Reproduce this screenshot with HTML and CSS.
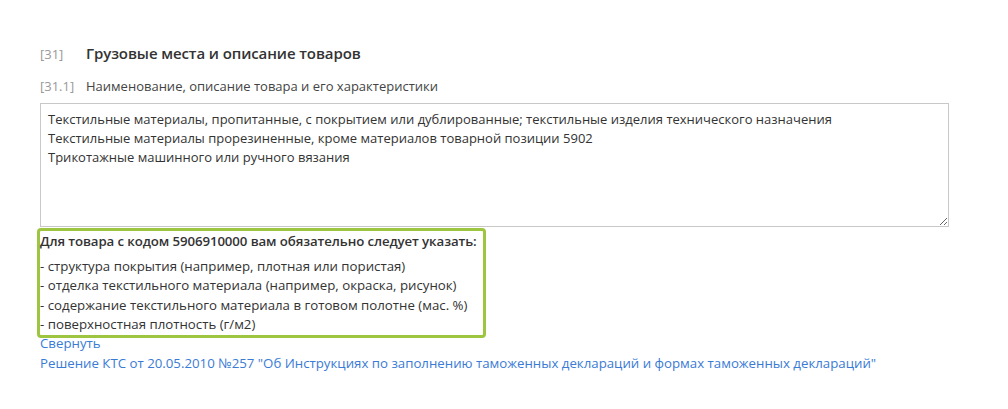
FILE: index.html
```html
<!DOCTYPE html>
<html lang="ru">
<head>
<meta charset="utf-8">
<link rel="stylesheet" href="styles.css">
</head>
<body>
<div class="page">
  <div class="section-head">
    <span class="num">[31]</span>
    <span class="title">Грузовые места и описание товаров</span>
  </div>
  <div class="field-head">
    <span class="num">[31.1]</span>
    <span class="label">Наименование, описание товара и его характеристики</span>
  </div>
  <textarea class="desc">Текстильные материалы, пропитанные, с покрытием или дублированные; текстильные изделия технического назначения
Текстильные материалы прорезиненные, кроме материалов товарной позиции 5902
Трикотажные машинного или ручного вязания</textarea>
  <div class="hint">
    <div class="hint-title">Для товара с кодом 5906910000 вам обязательно следует указать:</div>
    <div class="hint-item">- структура покрытия (например, плотная или пористая)</div>
    <div class="hint-item">- отделка текстильного материала (например, окраска, рисунок)</div>
    <div class="hint-item">- содержание текстильного материала в готовом полотне (мас. %)</div>
    <div class="hint-item">- поверхностная плотность (г/м2)</div>
  </div>
  <a class="link" href="#">Свернуть</a>
  <a class="link" href="#">Решение КТС от 20.05.2010 №257 "Об Инструкциях по заполнению таможенных деклараций и формах таможенных деклараций"</a>
</div>
</body>
</html>
```
FILE: styles.css
```css
html, body {
  margin: 0;
  padding: 0;
  background: #fff;
}
body {
  font-family: "Open Sans", "Noto Sans", sans-serif;
  color: #333;
  font-size: 13px;
}
.page {
  padding: 42px 0 0 40px;
  width: 909px;
  display: flex;
  flex-direction: column;
}
.section-head {
  display: flex;
  align-items: baseline;
  height: 22px;
  line-height: 22px;
}
.section-head .num {
  width: 46px;
  color: #999;
  font-size: 13px;
}
.section-head .title {
  font-size: 15px;
  font-weight: 600;
  color: #333;
  letter-spacing: -0.1px;
}
.field-head {
  display: flex;
  align-items: baseline;
  margin-top: 12px;
  line-height: 20px;
  height: 20px;
}
.field-head .num {
  width: 46px;
  color: #999;
}
.field-head .label {
  color: #444;
}
.desc {
  margin: 7px 0 0 0;
  box-sizing: border-box;
  width: 909px;
  height: 124px;
  border: 1px solid #c8c8c8;
  padding: 6px 7px;
  font-family: "Open Sans", "Noto Sans", sans-serif;
  font-size: 13px;
  line-height: 19px;
  color: #333;
  resize: vertical;
  outline: none;
}
.hint {
  margin: 1px 0 -5px -3px;
  width: 449px;
  box-sizing: border-box;
  border: 3px solid #9dc540;
  border-radius: 4px;
  padding: 1px 0 0 0;
  line-height: 19.5px;
  font-size: 13.25px;
}
.hint-title {
  font-weight: 600;
  white-space: nowrap;
  letter-spacing: -0.1px;
  margin-bottom: 5px;
}
.link {
  color: #3a7bd5;
  text-decoration: none;
  line-height: 20px;
  font-size: 13.25px;
  align-self: flex-start;
}
```
